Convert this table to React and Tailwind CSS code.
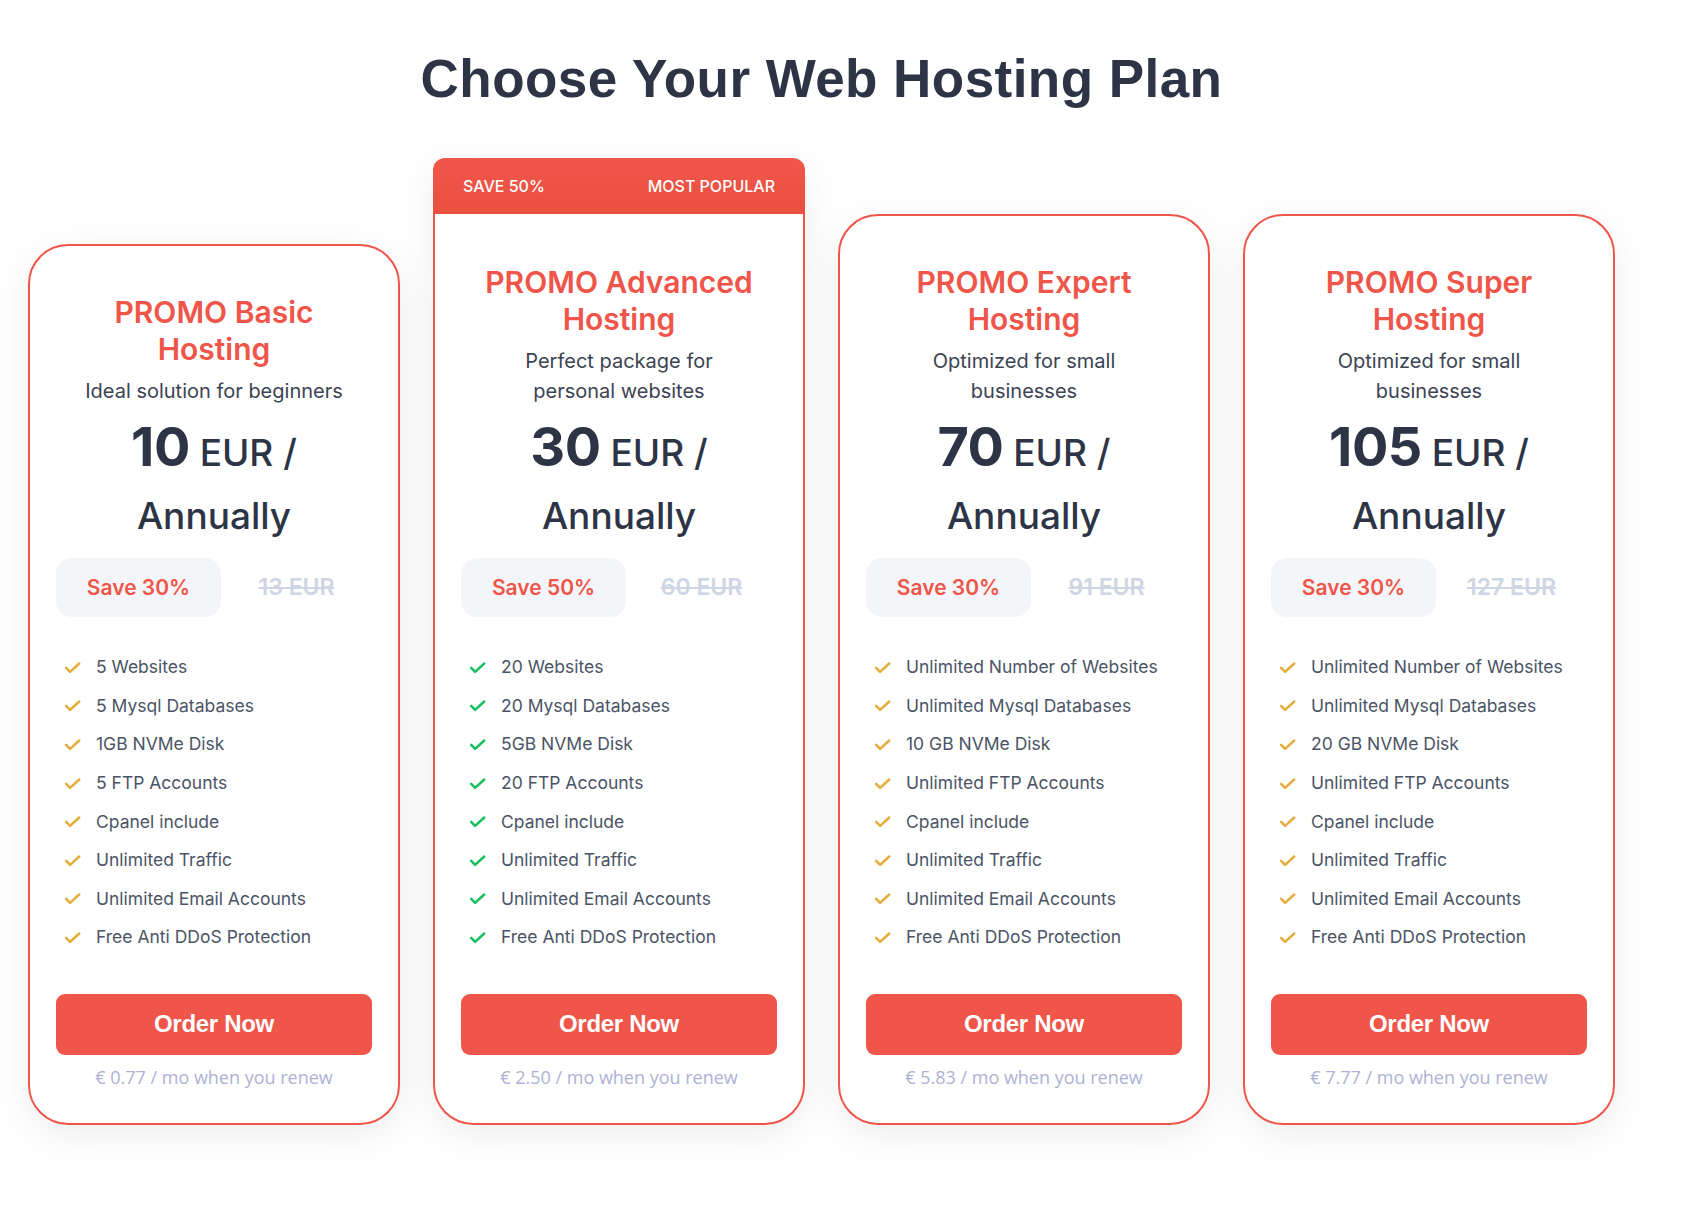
import React from 'react';

const plans = [
  {
    title: ['PROMO Basic', 'Hosting'],
    desc: ['Ideal solution for beginners'],
    price: '10',
    save: '30%',
    old: '13 EUR',
    renew: '€ 0.77 / mo when you renew',
    features: [
      '5 Websites',
      '5 Mysql Databases',
      '1GB NVMe Disk',
      '5 FTP Accounts',
      'Cpanel include',
      'Unlimited Traffic',
      'Unlimited Email Accounts',
      'Free Anti DDoS Protection',
    ],
  },
  {
    title: ['PROMO Advanced', 'Hosting'],
    desc: ['Perfect package for', 'personal websites'],
    price: '30',
    save: '50%',
    old: '60 EUR',
    renew: '€ 2.50 / mo when you renew',
    popular: true,
    features: [
      '20 Websites',
      '20 Mysql Databases',
      '5GB NVMe Disk',
      '20 FTP Accounts',
      'Cpanel include',
      'Unlimited Traffic',
      'Unlimited Email Accounts',
      'Free Anti DDoS Protection',
    ],
  },
  {
    title: ['PROMO Expert', 'Hosting'],
    desc: ['Optimized for small', 'businesses'],
    price: '70',
    save: '30%',
    old: '91 EUR',
    renew: '€ 5.83 / mo when you renew',
    features: [
      'Unlimited Number of Websites',
      'Unlimited Mysql Databases',
      '10 GB NVMe Disk',
      'Unlimited FTP Accounts',
      'Cpanel include',
      'Unlimited Traffic',
      'Unlimited Email Accounts',
      'Free Anti DDoS Protection',
    ],
  },
  {
    title: ['PROMO Super', 'Hosting'],
    desc: ['Optimized for small', 'businesses'],
    price: '105',
    save: '30%',
    old: '127 EUR',
    renew: '€ 7.77 / mo when you renew',
    features: [
      'Unlimited Number of Websites',
      'Unlimited Mysql Databases',
      '20 GB NVMe Disk',
      'Unlimited FTP Accounts',
      'Cpanel include',
      'Unlimited Traffic',
      'Unlimited Email Accounts',
      'Free Anti DDoS Protection',
    ],
  },
];

const Check = ({ color }) => (
  <svg width="19" height="19" viewBox="0 0 24 24" fill="none" stroke={color} strokeWidth="3.2" strokeLinecap="round" strokeLinejoin="round">
    <path d="M4 12.5l5 5L20.5 7" />
  </svg>
);

const CardBody = ({ plan }) => (
  <div className="flex flex-col px-[26px]">
    <h3 className="text-center text-[30px] leading-[37px] font-semibold text-[#f0554a]">
      {plan.title.map((t) => (
        <span key={t} className="block">{t}</span>
      ))}
    </h3>
    <p className="mt-[8px] text-center text-[20px] leading-[30px] text-[#3b4353]">
      {plan.desc.map((d) => (
        <span key={d} className="block">{d}</span>
      ))}
    </p>
    <div className="mt-[9px] text-center text-[#2d3446]">
      <div className="h-[63px] text-[54px] leading-[63px]">
        <span className="font-bold tracking-[-0.5px]">{plan.price}</span>
        <span className="text-[37px] font-medium"> EUR /</span>
      </div>
      <div className="h-[63px] pt-[13px] text-[37px] leading-[50px] font-medium">Annually</div>
    </div>
    <div className="mt-[17px] flex items-center">
      <div className="flex h-[59px] w-[165px] items-center justify-center rounded-[16px] bg-[#f4f5f8] text-[21px] font-semibold text-[#f0554a]">
        Save {plan.save}
      </div>
      <div className="flex-1 text-center text-[23px] font-semibold text-[#cdd6e2] line-through">{plan.old}</div>
    </div>
    <ul className="mt-[31px] pl-[7px]">
      {plan.features.map((f) => (
        <li key={f} className="flex h-[38.6px] items-center gap-[14px] text-[17.5px] text-[#4a5466]">
          <Check color={plan.popular ? '#17bf5f' : '#e4ad3c'} />
          <span>{f}</span>
        </li>
      ))}
    </ul>
    <button
      type="button"
      className="mt-[37px] h-[61px] w-full rounded-[9px] bg-[#f0554a] text-[24px] font-bold tracking-[-0.3px] text-white"
      style={{ fontFamily: '"Liberation Sans", Arial, sans-serif' }}
    >
      Order Now
    </button>
    <p
      className="mt-[9px] text-center text-[18px] leading-[26px] text-[#adb2d4]"
      style={{ fontFamily: '"Open Sans", sans-serif' }}
    >
      {plan.renew}
    </p>
  </div>
);

const PlanCard = ({ plan }) => {
  if (plan.popular) {
    return (
      <div className="w-[372px] rounded-t-[12px] rounded-b-[40px] shadow-[0_10px_40px_rgba(0,0,0,0.07)]">
        <div className="flex h-[56px] items-center justify-between rounded-t-[12px] bg-gradient-to-b from-[#f1564b] to-[#e9503f] px-[30px] text-[16px] font-medium text-white">
          <span>SAVE {plan.save}</span>
          <span>MOST POPULAR</span>
        </div>
        <div className="rounded-b-[40px] border-x-2 border-b-2 border-[#f0554a] bg-white pt-[50px] pb-[33px]">
          <CardBody plan={plan} />
        </div>
      </div>
    );
  }
  return (
    <div className="w-[372px] rounded-[40px] border-2 border-[#f0554a] bg-white pt-[48px] pb-[33px] shadow-[0_10px_40px_rgba(0,0,0,0.07)]">
      <CardBody plan={plan} />
    </div>
  );
};

export default function App() {
  return (
    <div className="min-h-screen bg-white" style={{ fontFamily: 'Inter, "Noto Sans", sans-serif' }}>
      <div className="w-[1615px] pl-[28px] pt-[47px] pb-[85px]">
        <h1
          className="text-center text-[53px] leading-[64px] font-bold tracking-[0.45px] text-[#2d3446]"
          style={{ fontFamily: '"Liberation Sans", Arial, sans-serif' }}
        >
          Choose Your Web Hosting Plan
        </h1>
        <div className="mt-[47px] flex items-end gap-[33px]">
          {plans.map((p) => (
            <PlanCard key={p.title[0]} plan={p} />
          ))}
        </div>
      </div>
    </div>
  );
}
